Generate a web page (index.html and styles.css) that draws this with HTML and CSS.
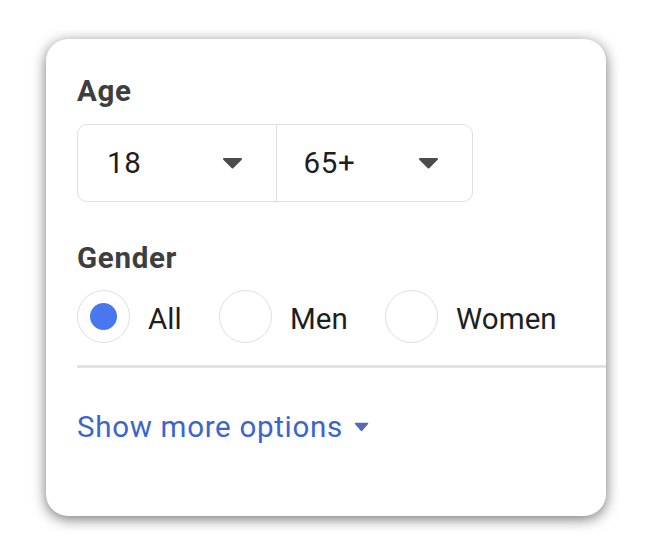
FILE: index.html
```html
<!DOCTYPE html>
<html lang="en">
<head>
    <meta charset="UTF-8">
    <meta name="viewport" content="width=device-width, initial-scale=1.0">
    <title>Audience</title>
    <link rel="stylesheet" href="styles.css">
</head>
<body>
    <div class="card">
        <h2 class="label">Age</h2>
        <div class="age-range">
            <div class="age-select">
                <span>18</span>
                <svg class="caret" width="21" height="12" viewBox="0 0 21 12"><path d="M2 2 H19 L10.5 10.5 Z"/></svg>
            </div>
            <div class="age-select">
                <span>65+</span>
                <svg class="caret" width="21" height="12" viewBox="0 0 21 12"><path d="M2 2 H19 L10.5 10.5 Z"/></svg>
            </div>
        </div>

        <h2 class="label gender-label">Gender</h2>
        <div class="radios">
            <label class="radio-item">
                <span class="radio checked"></span>
                <span class="radio-text">All</span>
            </label>
            <label class="radio-item">
                <span class="radio"></span>
                <span class="radio-text">Men</span>
            </label>
            <label class="radio-item">
                <span class="radio"></span>
                <span class="radio-text">Women</span>
            </label>
        </div>

        <div class="divider"></div>

        <a class="more-link" href="#">Show more options
            <svg class="more-caret" width="15" height="10" viewBox="0 0 15 10"><path d="M1.5 1.5 H13.5 L7.5 8.5 Z"/></svg>
        </a>
    </div>
</body>
</html>
```

FILE: styles.css
```css
body {
  margin: 0;
  padding: 39px 0 40px 46px;
  background: #ffffff;
  font-family: Roboto, "Liberation Sans", sans-serif;
  color: #1c1e21;
  letter-spacing: 0.7px;
}

.card {
  box-sizing: border-box;
  width: 560px;
  height: 477px;
  padding: 35px 0 0 31px;
  background: #ffffff;
  border-radius: 22px;
  box-shadow: 0 3px 14px rgba(0, 0, 0, 0.55);
  overflow: hidden;
}

.label {
  margin: 0;
  font-size: 29.5px;
  line-height: 34px;
  font-weight: bold;
  color: #3d3e40;
}

.age-range {
  display: flex;
  width: 396px;
  height: 78px;
  box-sizing: border-box;
  margin-top: 16px;
  border: 1px solid #dddfe2;
  border-radius: 10px;
}

.age-select {
  flex: 1;
  display: flex;
  align-items: center;
  justify-content: space-between;
  padding: 0 33px 0 29px;
  font-size: 29.5px;
  line-height: 34px;
}

.age-select + .age-select {
  border-left: 1px solid #dddfe2;
  padding-left: 27px;
}

.caret path {
  fill: #4b4c4f;
  stroke: #4b4c4f;
  stroke-width: 2;
  stroke-linejoin: round;
}

.gender-label {
  margin-top: 39px;
}

.radios {
  display: flex;
  gap: 37px;
  margin-top: 15px;
}

.radio-item {
  display: flex;
  align-items: center;
  gap: 18px;
}

.radio {
  box-sizing: border-box;
  width: 53px;
  height: 53px;
  border: 1.5px solid #dedede;
  border-radius: 50%;
  display: flex;
  align-items: center;
  justify-content: center;
}

.radio.checked::after {
  content: "";
  width: 27px;
  height: 27px;
  border-radius: 50%;
  background: #4877ee;
}

.radio-text {
  font-size: 29.5px;
  line-height: 34px;
  padding-top: 4px;
  letter-spacing: 0.1px;
  color: #1c1e21;
}

.divider {
  height: 3px;
  margin-top: 22px;
  background: #e1e3e6;
}

.more-link {
  display: inline-flex;
  align-items: center;
  gap: 11px;
  margin-top: 42px;
  font-size: 29.5px;
  line-height: 34px;
  color: #3a65cf;
  text-decoration: none;
}

.more-caret path {
  fill: #5668b8;
  stroke: #5668b8;
  stroke-width: 1.5;
  stroke-linejoin: round;
}
```
